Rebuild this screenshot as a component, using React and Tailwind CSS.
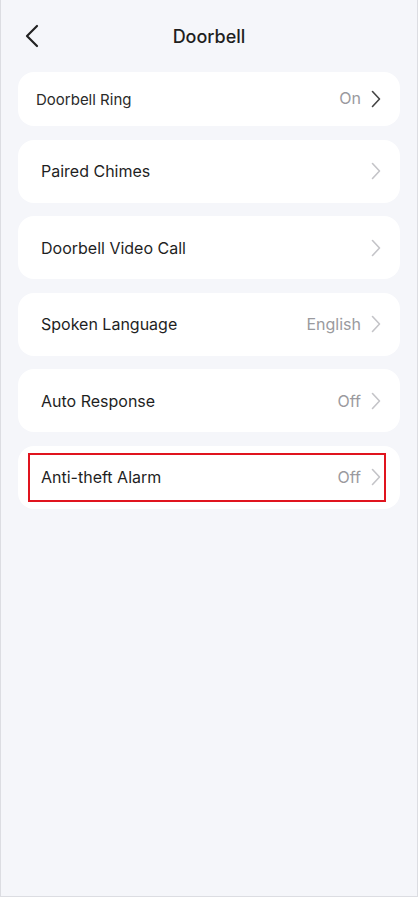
const rows = [
    { label: "Paired Chimes", value: "" },
    { label: "Doorbell Video Call", value: "" },
    { label: "Spoken Language", value: "English" },
    { label: "Auto Response", value: "Off" },
    { label: "Anti-theft Alarm", value: "Off", marked: true },
];

const Arrow = ({ dark }) => (
    <svg width="10" height="18" viewBox="0 0 10 18" fill="none"
         className={dark ? "text-[#444]" : "text-[#c4c4c8]"}>
        <path d="M1.5 1.5 L8.5 9 L1.5 16.5" stroke="currentColor" strokeWidth="1.6"
              strokeLinecap="round" strokeLinejoin="round"/>
    </svg>
)

const BackIcon = () => (
    <svg width="16" height="24" viewBox="0 0 16 24" fill="none" className="text-[#222]">
        <path d="M13 2 L3 12 L13 22" stroke="currentColor" strokeWidth="2.2"
              strokeLinecap="round" strokeLinejoin="round"/>
    </svg>
)

const SettingRow = ({ label, value, marked }) => (
    <div className="bg-white rounded-[16px] h-[63px] flex items-center">
        <div className={
            marked
                ? "ml-[10px] mr-[14px] h-[49px] w-full flex items-center border-2 border-[#e0141e] pl-[11px] pr-[3px]"
                : "w-full flex items-center pl-[23px] pr-[19px]"
        }>
            <span className="text-[16px] text-[#1f1f1f] flex-1">{label}</span>
            {value && <span className="text-[16px] text-[#9a9a9e] mr-[10px]">{value}</span>}
            <Arrow/>
        </div>
    </div>
)

const App = () => {
    return (
        <div className="w-[418px] h-[897px] bg-[#f5f6fa] border-x border-b border-[#dcdde2] font-['Inter',sans-serif]">
            <div className="relative h-[72px] flex items-center justify-center">
                <div className="absolute left-[23px] top-[24px]">
                    <BackIcon/>
                </div>
                <h1 className="text-[18px] font-medium text-[#1f1f1f]">Doorbell</h1>
            </div>
            <div className="px-[17px] flex flex-col gap-[13.5px]">
                <div className="bg-white rounded-[16px] h-[54px] flex items-center pl-[18px] pr-[19px]">
                    <span className="text-[15px] text-[#2a2a2a] flex-1 mt-[2px]">Doorbell Ring</span>
                    <span className="text-[16px] text-[#9a9a9e] mr-[10px] -mt-[2px]">On</span>
                    <Arrow dark/>
                </div>
                {rows.map((r) => (
                    <SettingRow key={r.label} {...r}/>
                ))}
            </div>
        </div>
    )
}

export default App
